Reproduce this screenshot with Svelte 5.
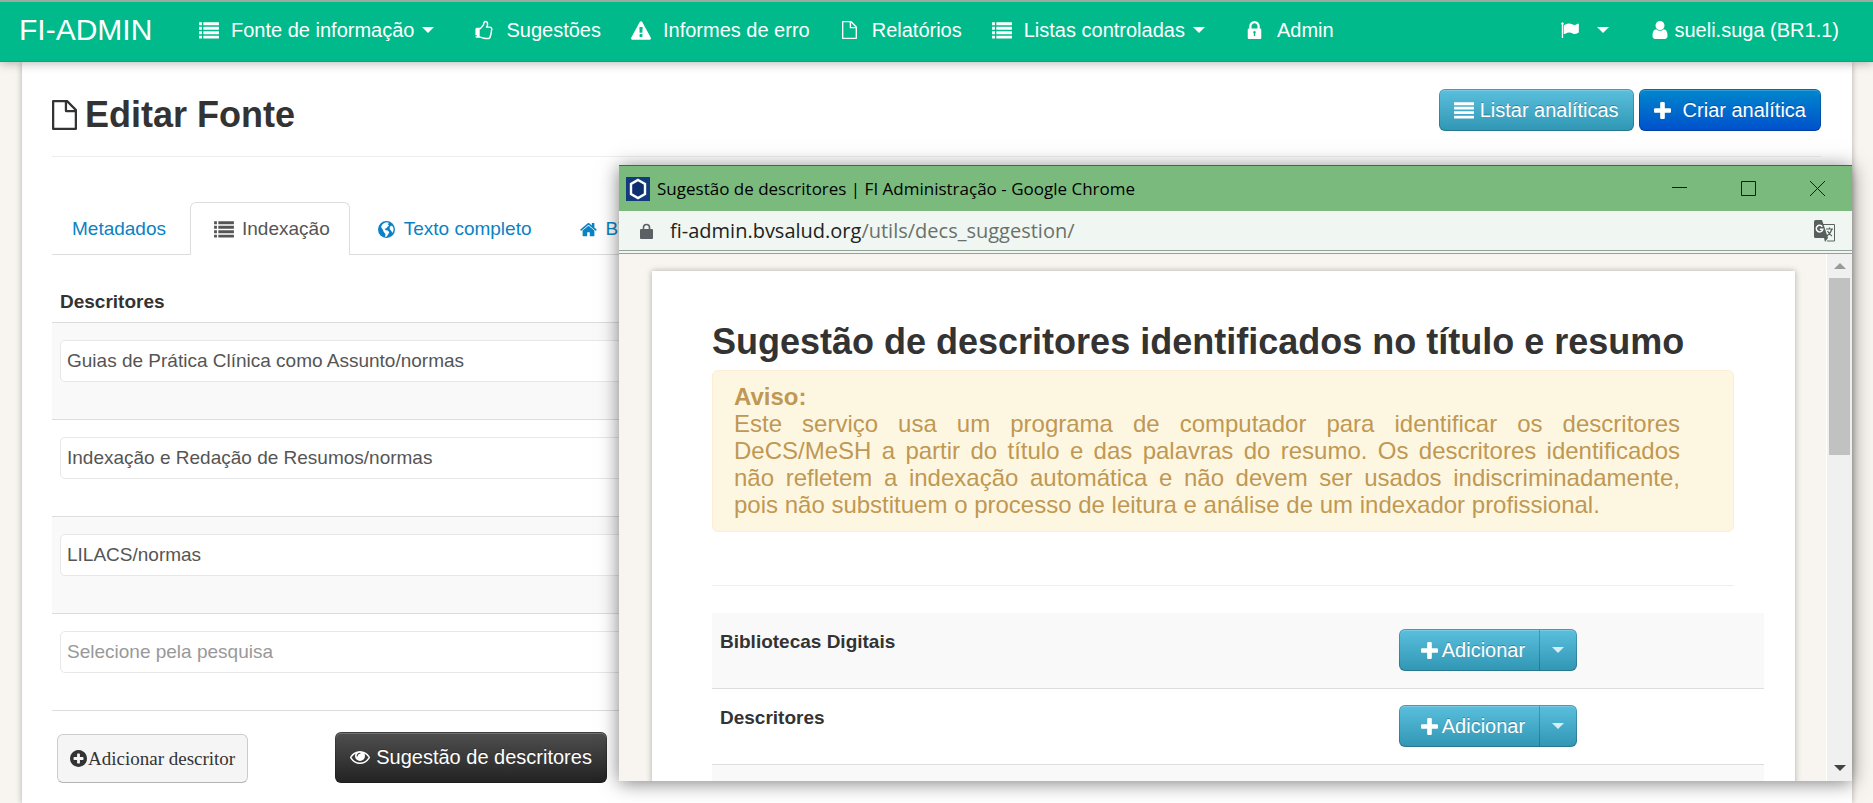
<script lang="ts">
  type IconDef = { box: string; d: string };

  const icons: Record<string, IconDef> = {
    list: {
      box: '0 0 1792 1536',
      d: 'M0 32h256v270H0zM384 32h1408v270H384zM0 432h256v270H0zM384 432h1408v270H384zM0 832h256v270H0zM384 832h1408v270H384zM0 1232h256v270H0zM384 1232h1408v270H384z'
    },
    lines: {
      box: '0 0 1792 1536',
      d: 'M0 32h1792v256H0zM0 432h1792v256H0zM0 832h1792v256H0zM0 1232h1792v256H0z'
    },
    thumb: {
      box: '0 0 1792 1792',
      d: 'M256 1408q0-26-19-45t-45-19-45 19-19 45 19 45 45 19 45-19 19-45zm1280-576q0-51-39-89.5t-89-38.5h-352q0-58 48-159.5t48-160.5q0-98-32-145t-128-47q-26 26-38 85t-30.5 125.5-59.5 109.5q-22 23-77 91-4 5-23 30t-31.5 41-34.5 42.5-40 44-38.5 35.5-40 27-35.5 9h-32v640h32q13 0 31.5 3t33 6.5 38 11 35 11.5 35.5 12.5 29 10.5q211 73 342 73h121q192 0 192-167 0-26-5-56 30-16 47.5-52.5t17.5-73.5-18-69q53-50 53-119 0-25-10-55.5t-25-47.5q32-1 53.5-47t21.5-81zm128-1q0 89-49 163 9 33 9 69 0 77-38 144 3 21 3 43 0 101-60 178 1 139-85 219.5t-227 80.5h-129q-96 0-189.5-22.5t-216.5-65.5q-116-40-138-40h-288q-53 0-90.5-37.5t-37.5-90.5v-640q0-53 37.5-90.5t90.5-37.5h274q36-24 137-155 58-75 107-128 24-25 35.5-85.5t30.5-126.5 62-108q39-37 90-37 84 0 151 32.5t102 101.5 35 186q0 93-48 192h176q104 0 180 76t76 179z'
    },
    warning: {
      box: '0 0 1792 1664',
      d: 'M1024 1375v-190q0-14-9.5-23.5t-22.5-9.5h-192q-13 0-22.5 9.5t-9.5 23.5v190q0 14 9.5 23.5t22.5 9.5h192q13 0 22.5-9.5t9.5-23.5zm-2-374l18-459q0-12-10-19-13-11-24-11h-220q-11 0-24 11-10 7-10 21l17 457q0 10 10 16.5t24 6.5h185q14 0 23.5-6.5t10.5-16.5zm-14-934l768 1408q35 63-2 126-17 29-46.5 46t-63.5 17h-1536q-34 0-63.5-17t-46.5-46q-37-63-2-126l768-1408q17-31 47-49t65-18 65 18 47 49z'
    },
    file: {
      box: '0 0 1280 1536',
      d: 'M0 64Q0 0 64 0H800L1280 480V1472Q1280 1536 1216 1536H64Q0 1536 0 1472ZM116 116V1420H1164V624H736Q656 624 656 544V116ZM772 140V508H1140Z'
    },
    lock: {
      box: '0 0 1152 1536',
      d: 'M320 640h512V448q0-106-75-181t-181-75-181 75-75 181zM1152 736v704q0 40-28 68t-68 28H96q-40 0-68-28t-28-68V736q0-40 28-68t68-28h32V448q0-184 132-316T576 0t316 132 132 316v192h32q40 0 68 28t28 68zM576 860a110 110 0 0 0-60 202v220h120v-220a110 110 0 0 0-60-202z'
    },
    flag: {
      box: '64 100 1728 1660',
      d: 'M320 256q0 72-64 110v1266q0 13-9.5 22.5t-22.5 9.5h-64q-13 0-22.5-9.5t-9.5-22.5v-1266q-64-38-64-110 0-53 37.5-90.5t90.5-37.5 90.5 37.5 37.5 90.5zm1472 64v763q0 25-12.5 38.5t-39.5 27.5q-215 116-369 116-61 0-123.5-22t-108.5-48-115.5-48-142.5-22q-192 0-464 146-17 9-33 9-26 0-45-19t-19-45v-742q0-32 31-55 21-14 79-43 236-120 421-120 107 0 200 29t219 88q38 19 88 19 54 0 117.5-21t110-47 88-47 54.5-21q26 0 45 19t19 45z'
    },
    user: {
      box: '256 128 1280 1536',
      d: 'M1536 1399q0 109-62.5 187t-150.5 78h-854q-88 0-150.5-78t-62.5-187q0-85 8.5-160.5t31.5-152 58.5-131 94-89 134.5-34.5q131 128 313 128t313-128q76 0 134.5 34.5t94 89 58.5 131 31.5 152 8.5 160.5zm-256-887q0 159-112.5 271.5t-271.5 112.5-271.5-112.5-112.5-271.5 112.5-271.5 271.5-112.5 271.5 112.5 112.5 271.5z'
    },
    plus: {
      box: '192 128 1408 1408',
      d: 'M1600 736v192q0 40-28 68t-68 28h-416v416q0 40-28 68t-68 28h-192q-40 0-68-28t-28-68v-416h-416q-40 0-68-28t-28-68v-192q0-40 28-68t68-28h416v-416q0-40 28-68t68-28h192q40 0 68 28t28 68v416h416q40 0 68 28t28 68z'
    },
    home: {
      box: '64 220 1664 1330',
      d: 'M1472 992v480q0 26-19 45t-45 19h-384v-384h-256v384h-384q-26 0-45-19t-19-45v-480q0-1 .5-3t.5-3l575-474 575 474q1 2 1 6zm223-69l-62 74q-8 9-21 11h-3q-13 0-21-7l-692-577-692 577q-12 8-24 7-13-2-21-11l-62-74q-8-10-7-23.5t11-21.5l719-599q32-26 76-26t76 26l244 204v-195q0-14 9-23t23-9h192q14 0 23 9t9 23v408l219 182q10 8 11 21.5t-7 23.5z'
    },
    globe: {
      box: '0 0 100 100',
      d: 'M50 0a50 50 0 1 0 0 100a50 50 0 1 0 0-100zM50 8L64 11L58 20L66 26L56 34L48 44L38 46L46 54L58 56L66 66L60 78L50 92L42 92L44 76L34 64L28 50L18 36L24 22L36 12zM74 30L84 28L91 42L91 58L84 70L78 58L70 50L68 38z'
    },
    pluscircle: {
      box: '128 128 1536 1536',
      d: 'M1344 960v-128q0-26-19-45t-45-19h-256v-256q0-26-19-45t-45-19h-128q-26 0-45 19t-19 45v256h-256q-26 0-45 19t-19 45v128q0 26 19 45t45 19h256v256q0 26 19 45t45 19h128q26 0 45-19t19-45v-256h256q26 0 45-19t19-45zm320-64q0 209-103 385.5t-279.5 279.5-385.5 103-385.5-103-279.5-279.5-103-385.5 103-385.5 279.5-279.5 385.5-103 385.5 103 279.5 279.5 103 385.5z'
    },
    eye: {
      box: '0 384 1792 1152',
      d: 'M1664 960q-152-236-381-353 61 104 61 225 0 185-131.5 316.5t-316.5 131.5-316.5-131.5-131.5-316.5q0-121 61-225-229 117-381 353 133 205 333.5 326.5t434.5 121.5 434.5-121.5 333.5-326.5zm-720-384q0-20-14-34t-34-14q-125 0-214.5 89.5t-89.5 214.5q0 20 14 34t34 14 34-14 14-34q0-86 61-147t147-61q20 0 34-14t14-34zm848 384q0 34-20 69-140 230-376.5 368.5t-499.5 138.5-499.5-139-376.5-368q-20-35-20-69t20-69q140-229 376.5-368t499.5-139 499.5 139 376.5 368q20 35 20 69z'
    }
  };

  const menu = [
    { icon: 'list', label: 'Fonte de informação', drop: true },
    { icon: 'thumb', label: 'Sugestões' },
    { icon: 'warning', label: 'Informes de erro' },
    { icon: 'file', label: 'Relatórios' },
    { icon: 'list', label: 'Listas controladas', drop: true },
    { icon: 'lock', label: 'Admin' }
  ];

  const tabs = [
    { label: 'Metadados' },
    { label: 'Indexação', icon: 'list', active: true },
    { label: 'Texto completo', icon: 'globe' },
    { label: 'BVS', icon: 'home' }
  ];

  let descriptors = $state([
    'Guias de Prática Clínica como Assunto/normas',
    'Indexação e Redação de Resumos/normas',
    'LILACS/normas',
    ''
  ]);

  const suggestions = ['Bibliotecas Digitais', 'Descritores'];

  function addDescriptor() {
    descriptors.push('');
  }
</script>

{#snippet icon(name: string)}
  <svg class="icon {name}" viewBox={icons[name].box} aria-hidden="true">
    <path d={icons[name].d} fill="currentColor" fill-rule="evenodd" />
  </svg>
{/snippet}

<div class="page">
  <nav class="navbar">
    <a class="brand" href="#home">FI-ADMIN</a>
    <ul class="menu">
      {#each menu as item}
        <li class:drop={item.drop}>
          <a href="#menu">
            <span class="slot">{@render icon(item.icon)}</span>
            {item.label}
            {#if item.drop}<span class="caret"></span>{/if}
          </a>
        </li>
      {/each}
    </ul>
    <div class="account">
      <button class="language" aria-label="Idioma">
        {@render icon('flag')}
        <span class="caret"></span>
      </button>
      <a href="#user">{@render icon('user')}sueli.suga (BR1.1)</a>
    </div>
  </nav>

  <main class="sheet">
    <header class="title">
      <h1>{@render icon('file')}Editar Fonte</h1>
      <div class="actions">
        <a class="btn info" href="#list">{@render icon('lines')}Listar analíticas</a>
        <a class="btn primary" href="#create">{@render icon('plus')}Criar analítica</a>
      </div>
    </header>

    <ul class="tabs">
      {#each tabs as tab}
        <li class:active={tab.active}>
          <a href="#tab">{#if tab.icon}{@render icon(tab.icon)}{/if}{tab.label}</a>
        </li>
      {/each}
    </ul>

    <table class="descriptors">
      <thead>
        <tr><th>Descritores</th></tr>
      </thead>
      <tbody>
        {#each descriptors as _, i}
          <tr>
            <td>
              <input
                type="text"
                aria-label="Descritor {i + 1}"
                placeholder="Selecione pela pesquisa"
                bind:value={descriptors[i]}
              />
            </td>
          </tr>
        {/each}
      </tbody>
    </table>

    <div class="tools">
      <button class="add" onclick={addDescriptor}>{@render icon('pluscircle')}Adicionar descritor</button>
      <button class="btn dark">{@render icon('eye')}Sugestão de descritores</button>
    </div>
  </main>

  <section class="window" aria-label="Sugestão de descritores">
    <div class="titlebar">
      <svg class="favicon" viewBox="0 0 24 24" aria-hidden="true">
        <rect width="24" height="24" fill="#123a7c" />
        <path d="M12 3l7 4v10l-7 4-7-4V7z" fill="#0c2f70" stroke="#fff" stroke-width="2.400" />
      </svg>
      <span class="caption">Sugestão de descritores | FI Administração - Google Chrome</span>
      <div class="controls">
        <button aria-label="Minimizar">
          <svg viewBox="0 0 15 15"><path d="M0 6.5h15" /></svg>
        </button>
        <button aria-label="Maximizar">
          <svg viewBox="0 0 15 15"><path d="M.5.5h14v14H.5z" /></svg>
        </button>
        <button aria-label="Fechar">
          <svg viewBox="0 0 15 15"><path d="M0 0l15 15M15 0L0 15" /></svg>
        </button>
      </div>
    </div>

    <div class="address">
      <svg class="padlock" viewBox="0 0 13 16" aria-hidden="true">
        <path d="M3.500 7V4.500a3 3 0 0 1 6 0V7" fill="none" stroke="#5a6064" stroke-width="1.600" />
        <rect y="6" width="13" height="10" rx="1" fill="#5a6064" />
      </svg>
      <span class="url">fi-admin.bvsalud.org<span>/utils/decs_suggestion/</span></span>
      <svg class="translate" viewBox="0 0 22 22" aria-hidden="true">
        <path d="M9 4.500h11.500v16.500H13" fill="none" stroke="#5a6460" />
        <path d="M1.500 0H8l1.200 3.500L14 18H1.500Q0 18 0 16.500V1.500Q0 0 1.500 0z" fill="#56605c" />
        <path d="M10 18h4l-3 4z" fill="#56605c" />
        <path d="M8.300 6.700A3.300 3.300 0 1 0 8.800 9.300H5.800" fill="none" stroke="#fff" stroke-width="1.500" />
        <path d="M12 9h7M15.500 7.500V9M18 9q-1 4-5 7M13.500 11q2 3.500 4.500 5" fill="none" stroke="#56605c" stroke-width="1.200" />
      </svg>
    </div>

    <div class="viewport">
      <div class="scroller">
        <article class="card">
          <h2>Sugestão de descritores identificados no título e resumo</h2>
          <div class="alert">
            <strong>Aviso:</strong>
            <p>
              Este serviço usa um programa de computador para identificar os descritores DeCS/MeSH a
              partir do título e das palavras do resumo. Os descritores identificados não refletem a
              indexação automática e não devem ser usados indiscriminadamente, pois não substituem o
              processo de leitura e análise de um indexador profissional.
            </p>
          </div>
          <hr />
          <table class="suggestions">
            <tbody>
              {#each suggestions as name}
                <tr>
                  <th scope="row">{name}</th>
                  <td>
                    <div class="group">
                      <button class="btn info">{@render icon('plus')}Adicionar</button>
                      <button class="btn info toggle" aria-label="Mais opções"><span class="caret"></span></button>
                    </div>
                  </td>
                </tr>
              {/each}
              <tr><th></th><td></td></tr>
            </tbody>
          </table>
        </article>
      </div>
      <div class="scrollbar">
        <span class="arrow up"></span>
        <span class="thumbbar"></span>
        <span class="arrow down"></span>
      </div>
    </div>
  </section>
</div>

<style>
  :global(body) {
    margin: 0;
    background: #f8f5f0;
  }

  .page {
    position: relative;
    min-height: 100vh;
    box-sizing: border-box;
    display: flex;
    flex-direction: column;
    overflow: hidden;
    font-family: 'Liberation Sans', Arial, sans-serif;
    font-size: 20px;
    color: #333;
  }

  a {
    color: inherit;
    text-decoration: none;
  }

  button {
    font: inherit;
    cursor: pointer;
  }

  ul {
    list-style: none;
    margin: 0;
    padding: 0;
  }

  .icon {
    display: block;
    flex: none;
    width: 20px;
    height: 17px;
  }

  .icon.thumb {
    height: 20px;
  }

  .icon.warning {
    height: 19px;
  }

  .icon.file,
  .icon.lock {
    width: 15px;
    height: 18px;
  }

  .icon.user {
    width: 16px;
    height: 18px;
  }

  .icon.plus,
  .icon.globe,
  .icon.home,
  .icon.pluscircle {
    width: 17px;
  }

  .caret {
    display: inline-block;
    border: 6px solid transparent;
    border-top-color: currentColor;
    border-bottom: 0;
  }

  .navbar {
    position: relative;
    z-index: 1;
    display: flex;
    align-items: center;
    height: 62px;
    padding: 0 34px 3px 19px;
    box-sizing: border-box;
    border-top: 2px solid #9dab9f;
    border-bottom: 1px solid #1f9c76;
    background: #00ba8b;
    color: #fff;
    box-shadow: 0 1px 10px rgba(0, 0, 0, 0.3);
  }

  .brand {
    width: 179px;
    font-size: 30px;
    line-height: 30px;
  }

  .menu {
    display: flex;
    gap: 29px;
    flex: 1;
  }

  .menu a,
  .account,
  .account a,
  .language {
    display: flex;
    align-items: center;
    white-space: nowrap;
  }

  .menu .drop {
    padding-right: 10px;
  }

  .menu .caret {
    margin-left: 8px;
  }

  .slot {
    display: flex;
    justify-content: center;
    width: 22px;
    margin-right: 11px;
  }

  .account a {
    gap: 6px;
  }

  .language {
    gap: 17px;
    margin-right: 43px;
    padding: 0;
    border: 0;
    background: none;
    color: #fff;
  }

  .sheet {
    flex: 1;
    margin: 0 21px 0 22px;
    padding: 0 31px 19px 30px;
    background: #fff;
    box-shadow: 0 0 6px rgba(0, 0, 0, 0.3);
  }

  .title {
    display: flex;
    justify-content: space-between;
    height: 94px;
    border-bottom: 1px solid #eee;
  }

  h1 {
    display: flex;
    align-items: center;
    gap: 8px;
    margin: 23px 0 0;
    height: 60px;
    font-size: 36px;
  }

  h1 .icon.file {
    width: 25px;
    height: 30px;
  }

  .actions {
    display: flex;
    gap: 5px;
    margin-top: 27px;
  }

  .btn {
    display: flex;
    align-items: center;
    gap: 6px;
    height: 42px;
    box-sizing: border-box;
    padding: 0 14px;
    border: 1px solid rgba(0, 0, 0, 0.2);
    border-radius: 6px;
    color: #fff;
    white-space: nowrap;
    text-shadow: 0 -1px 0 rgba(0, 0, 0, 0.25);
    box-shadow: inset 0 1px 0 rgba(255, 255, 255, 0.2);
  }

  .info {
    background: linear-gradient(#5bc0de, #2f96b4) border-box;
  }

  .primary {
    gap: 12px;
    background: linear-gradient(#0088cc, #0050cc) border-box;
  }

  .dark {
    height: 51px;
    background: linear-gradient(#505050, #222) border-box;
  }

  .tabs {
    display: flex;
    gap: 4px;
    margin-top: 45px;
    border-bottom: 1px solid #ddd;
    font-size: 19px;
    color: #0a82c4;
  }

  .tabs a {
    display: flex;
    align-items: center;
    gap: 8px;
    height: 52px;
    padding: 0 19px;
    border: 1px solid transparent;
    border-bottom: 0;
    border-radius: 6px 6px 0 0;
    margin-bottom: -1px;
  }

  .tabs .icon {
    margin-left: 4px;
  }

  .tabs .icon.globe,
  .tabs .icon.home {
    margin-right: 1px;
  }

  .tabs .active a {
    border-color: #ddd;
    background: #fff;
    color: #555;
  }

  table {
    width: 100%;
    border-collapse: collapse;
  }

  th {
    text-align: left;
    font-size: 19px;
    line-height: 26px;
  }

  .descriptors {
    margin-top: 34px;
  }

  .descriptors th {
    padding: 0 8px 7px;
  }

  .descriptors td {
    padding: 17px 8px 37px;
    border-top: 1px solid #ddd;
  }

  tbody tr:nth-child(odd) {
    background: #f9f9f9;
  }

  input {
    display: block;
    width: 100%;
    height: 42px;
    box-sizing: border-box;
    padding: 0 6px;
    border: 1px solid #e8e8e8;
    border-radius: 5px;
    background: #fff;
    color: #555;
    font-family: inherit;
    font-size: 19px;
  }

  input::placeholder {
    color: #999;
  }

  .tools {
    display: flex;
    align-items: flex-end;
    gap: 87px;
    padding: 21px 5px 0;
    border-top: 1px solid #ddd;
  }

  .add {
    display: flex;
    align-items: center;
    gap: 1px;
    height: 49px;
    padding: 0 12px;
    border: 1px solid #ccc;
    border-bottom-color: #b3b3b3;
    border-radius: 6px;
    background: #f5f5f5;
    color: #333;
    font-family: 'Liberation Serif', 'Times New Roman', serif;
    font-size: 19px;
  }

  .window {
    position: absolute;
    z-index: 2;
    top: 165px;
    left: 619px;
    right: 21px;
    height: 616px;
    box-sizing: border-box;
    display: flex;
    flex-direction: column;
    border-top: 1px solid #44694a;
    background: #f8f5f0;
    box-shadow: 0 2px 18px rgba(0, 0, 0, 0.5);
  }

  .titlebar {
    display: flex;
    align-items: center;
    height: 45px;
    padding: 0 0 0 7px;
    background: #7abb7d;
    color: #000;
    font-family: 'Open Sans', 'Noto Sans', sans-serif;
    font-size: 17px;
  }

  .favicon {
    width: 24px;
    height: 24px;
    margin-right: 7px;
  }

  .caption {
    flex: 1;
    white-space: nowrap;
  }

  .controls {
    display: flex;
  }

  .controls button {
    display: grid;
    place-items: center;
    width: 69px;
    height: 45px;
    padding: 0;
    border: 0;
    background: none;
  }

  .controls svg {
    width: 15px;
    height: 15px;
    fill: none;
    stroke: #10200f;
  }

  .address {
    display: flex;
    align-items: center;
    height: 39px;
    padding: 0 16px 0 21px;
    background: #f0f7f2;
    border-bottom: 4px double #95a298;
    font-family: 'Open Sans', 'Noto Sans', sans-serif;
    font-size: 20px;
    color: #222;
  }

  .padlock {
    width: 13px;
    height: 16px;
    margin-right: 17px;
  }

  .url {
    flex: 1;
  }

  .url span {
    color: #6a706c;
  }

  .translate {
    width: 22px;
    height: 22px;
  }

  .viewport {
    display: flex;
    flex: 1;
    min-height: 0;
  }

  .scroller {
    flex: 1;
    padding: 17px 31px 0 33px;
    overflow: hidden;
  }

  .card {
    padding: 43px 61px 20px 60px;
    background: #fff;
    box-shadow: 0 0 6px rgba(0, 0, 0, 0.3);
  }

  h2 {
    margin: 0;
    font-size: 36px;
    line-height: 56px;
    white-space: nowrap;
  }

  .alert {
    padding: 12px 53px 13px 21px;
    border: 1px solid #fbeed5;
    border-radius: 6px;
    background: #fdf7e2;
    color: #c09853;
    font-size: 24px;
    line-height: 27px;
    text-align: justify;
  }

  .alert p {
    margin: 0;
  }

  hr {
    margin: 53px 0 27px;
    border: 0;
    border-top: 1px solid #eee;
  }

  .suggestions {
    width: calc(100% + 30px);
    table-layout: fixed;
  }

  .suggestions th,
  .suggestions td {
    padding: 16px 8px 17px;
    vertical-align: top;
    border-top: 1px solid #ddd;
  }

  .suggestions th {
    width: 63%;
  }

  .suggestions tr:first-child > * {
    border-top: 0;
  }

  .group {
    display: flex;
  }

  .group .btn {
    padding: 0 14px 0 21px;
    gap: 4px;
    border-radius: 6px 0 0 6px;
  }

  .group .toggle {
    padding: 0 12px;
    margin-left: -1px;
    border-radius: 0 6px 6px 0;
    color: #d8eef5;
  }

  .scrollbar {
    display: flex;
    flex-direction: column;
    align-items: center;
    width: 25px;
    border-left: 1px solid #fff;
    background: #f0f0f0;
  }

  .arrow {
    border: 6px solid transparent;
  }

  .up {
    margin: 9px 0;
    border-bottom-color: #999;
    border-top: 0;
  }

  .thumbbar {
    width: 21px;
    height: 177px;
    background: #c1c1c1;
  }

  .down {
    margin-top: auto;
    margin-bottom: 10px;
    border-top-color: #444;
    border-bottom: 0;
  }
</style>
